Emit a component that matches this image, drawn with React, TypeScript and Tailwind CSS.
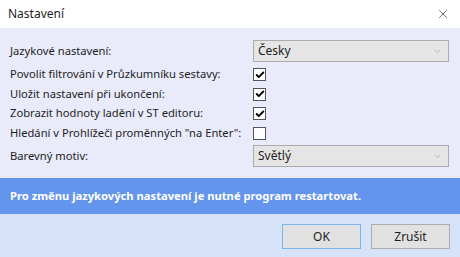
import { Check, ChevronDown, X } from "lucide-react"

const font = { fontFamily: '"Noto Sans", "Open Sans", sans-serif' }

function Combo({ value }: { value: string }) {
  return (
    <div className="flex h-[22px] w-[196px] items-center justify-between border border-[#acacac] bg-[#e5e5e5] pl-[4px] pr-[6px] text-[12px] text-[#1e1e1e]">
      <span>{value}</span>
      <ChevronDown className="h-[9px] w-[9px] text-[#a8a8a8]" strokeWidth={2} />
    </div>
  )
}

function Box({ checked }: { checked: boolean }) {
  return (
    <div className="flex h-[13px] w-[13px] items-center justify-center border border-[#555] bg-white">
      {checked && <Check className="h-[10px] w-[10px] text-black" strokeWidth={4.5} />}
    </div>
  )
}

const checks = [
  { label: "Povolit filtrování v Průzkumníku sestavy:", checked: true },
  { label: "Uložit nastavení při ukončení:", checked: true },
  { label: "Zobrazit hodnoty ladění v ST editoru:", checked: true },
  { label: "Hledání v Prohlížeči proměnných \"na Enter\":", checked: false },
]

export default function App() {
  return (
    <div className="flex h-[257px] w-[460px] flex-col bg-white text-[12px] text-[#1e1e1e]" style={font}>
      <div className="flex h-[28px] items-center justify-between pl-[8px] pr-[10px] bg-white">
        <span className="text-[12px]">Nastavení</span>
        <X className="h-[14px] w-[14px] text-[#333]" strokeWidth={1.2} />
      </div>

      <div className="flex h-[150px] flex-col bg-[#e9ebfa] pl-[10px] pt-[12px]">
        <div className="flex h-[22px] items-center">
          <span className="w-[243px] whitespace-nowrap text-[11.2px]">Jazykové nastavení:</span>
          <Combo value="Česky" />
        </div>
        <div className="mt-[3px] flex flex-col">
          {checks.map((row) => (
            <div key={row.label} className="flex h-[19.5px] items-center">
              <span className="w-[243px] whitespace-nowrap text-[11.2px]">{row.label}</span>
              <Box checked={row.checked} />
            </div>
          ))}
        </div>
        <div className="mt-[2px] flex h-[22px] items-center">
          <span className="w-[243px] whitespace-nowrap text-[11.2px]">Barevný motiv:</span>
          <Combo value="Světlý" />
        </div>
      </div>

      <div className="flex h-[36px] items-center bg-[#6495ed] pl-[10px] text-[11.2px] font-bold text-white">
        Pro změnu jazykových nastavení je nutné program restartovat.
      </div>

      <div className="flex flex-1 items-start justify-end gap-[10px] bg-[#d6e2f7] pr-[10px] pt-[10px]">
        <button className="h-[25px] w-[79px] border border-[#7ab4ec] bg-[#e1e1e1] text-[12px]">OK</button>
        <button className="h-[25px] w-[79px] border border-[#adadad] bg-[#e1e1e1] text-[12px]">Zrušit</button>
      </div>
    </div>
  )
}
